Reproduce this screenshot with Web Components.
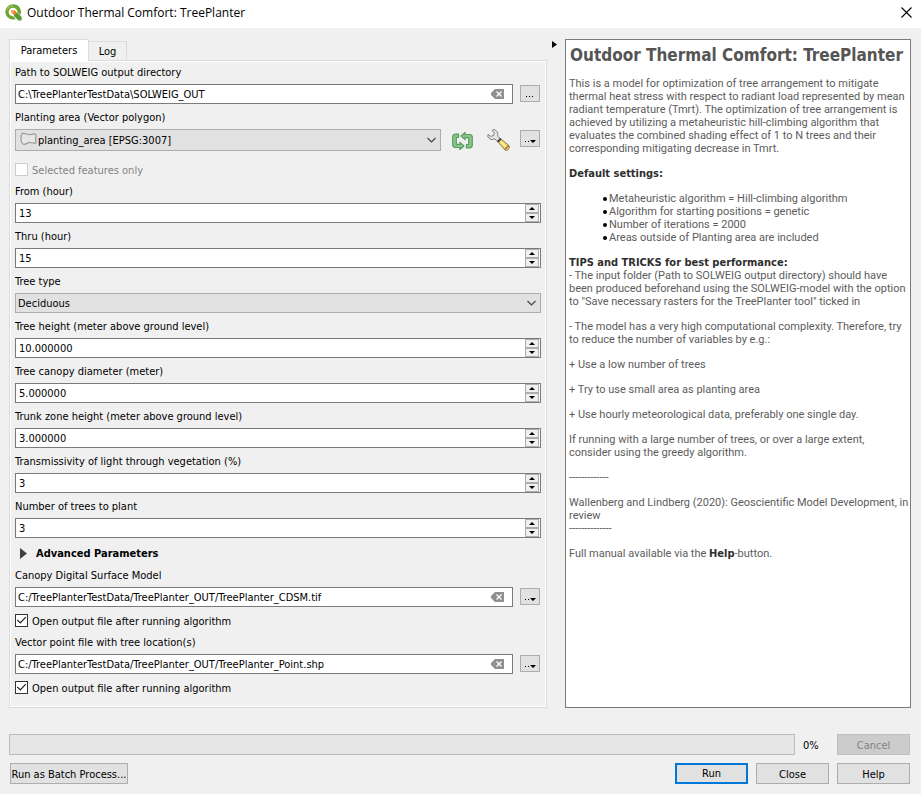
<!DOCTYPE html>
<html lang="en">
<head>
<meta charset="utf-8">
<title>Outdoor Thermal Comfort: TreePlanter</title>
<style>
html, body { margin: 0; min-height: 100vh; background: #f0f0f0; }
body { font: 11px/13px "DejaVu Sans Condensed", "DejaVu Sans", sans-serif; color: #000; display: flex; }
tool-dialog { flex: 1; }
</style>
</head>
<body>
<tool-dialog>
  <title-bar slot="title">Outdoor Thermal Comfort: TreePlanter</title-bar>
  <tab-pane slot="form">
    <path-field label="Path to SOLWEIG output directory" value="C:\TreePlanterTestData\SOLWEIG_OUT"></path-field>
    <combo-field label="Planting area (Vector polygon)" value="planting_area [EPSG:3007]" layer></combo-field>
    <check-field label="Selected features only" disabled></check-field>
    <spin-field label="From (hour)" value="13"></spin-field>
    <spin-field label="Thru (hour)" value="15"></spin-field>
    <combo-field label="Tree type" value="Deciduous"></combo-field>
    <spin-field label="Tree height (meter above ground level)" value="10.000000"></spin-field>
    <spin-field label="Tree canopy diameter (meter)" value="5.000000"></spin-field>
    <spin-field label="Trunk zone height (meter above ground level)" value="3.000000"></spin-field>
    <spin-field label="Transmissivity of light through vegetation (%)" value="3"></spin-field>
    <spin-field label="Number of trees to plant" value="3"></spin-field>
    <advanced-toggle>Advanced Parameters</advanced-toggle>
    <path-field label="Canopy Digital Surface Model" value="C:/TreePlanterTestData/TreePlanter_OUT/TreePlanter_CDSM.tif" menu></path-field>
    <check-field label="Open output file after running algorithm" checked></check-field>
    <path-field label="Vector point file with tree location(s)" value="C:/TreePlanterTestData/TreePlanter_OUT/TreePlanter_Point.shp" menu></path-field>
    <check-field label="Open output file after running algorithm" checked></check-field>
  </tab-pane>
  <help-panel slot="help"></help-panel>
  <dialog-footer slot="footer"></dialog-footer>
</tool-dialog>

<script>
const BASE = `
  *, *::before, :host { box-sizing: border-box; }
  :host { display: block; }
  button, input, select { font: inherit; color: inherit; margin: 0; padding: 0; border-radius: 0; outline: 0; }
  label { display: block; height: 13px; line-height: 15px; white-space: nowrap; }
  svg { display: block; }
`;
function define(name, render) {
  customElements.define(name, class extends HTMLElement {
    constructor() {
      super();
      this.attachShadow({ mode: "open" });
    }
    connectedCallback() {
      const t = document.createElement("template");
      const [css, html] = render(this);
      t.innerHTML = `<style>${BASE}${css}</style>${html}`;
      this.shadowRoot.replaceChildren(t.content.cloneNode(true));
    }
  });
}

define("tool-dialog", () => [`
  :host { display: flex; flex-direction: column; min-width: 0; }
  main { display: grid; grid-template-columns: minmax(0, 538fr) 18px minmax(0, 346fr); padding: 11px 10px 0 9px; }
  .split { border: 0; background: none; align-self: start; padding: 2px 0 0 5px; }
`, `
  <slot name="title"></slot>
  <main>
    <slot name="form"></slot>
    <button class="split" aria-label="Collapse help"><svg width="5" height="7"><path d="M0 0L5 3.5L0 7z"/></svg></button>
    <slot name="help"></slot>
  </main>
  <slot name="footer"></slot>
`]);

define("title-bar", () => [`
  :host { display: flex; align-items: center; gap: 5px; height: 28px; padding: 0 9px 3px 5px; background: #fff; font: 12px/16px "Open Sans", "Noto Sans", sans-serif; }
  h1 { font: inherit; margin: 0; flex: 1; white-space: nowrap; }
  button { border: 0; background: none; }
`, `
  <svg width="17" height="17" viewBox="0 0 17 17">
    <path d="M8 0.3A7.6 7.6 0 1 0 8 15.6c1 0 1.800-.1 2.700-.5L8.200 12.300A4.300 4.300 0 1 1 12.300 8.100l3 3A7.600 7.600 0 0 0 8 .3z" fill="#6ca62e"/>
    <path d="M9 8.600h3.300l4.300 4.400v3.400h-3.200L9 12z" fill="#589632"/>
    <path d="M2.200 6A6.200 6.200 0 0 1 8 1.900" fill="none" stroke="#9ac54d" stroke-width="1.200"/>
    <path d="M6.200 6.300h3.400l1.700 1.700v2.500H8.600L6.200 8.600z" fill="#ee7913"/>
    <path d="M6.200 6.300h2l1 1.400-1 1.500-2-1z" fill="#f5a968"/>
  </svg>
  <h1><slot></slot></h1>
  <button aria-label="Close window"><svg width="11" height="11"><path d="M.5.5l10 10M10.500.5l-10 10" stroke="#000" stroke-width="1.100"/></svg></button>
`]);

define("tab-pane", () => [`
  :host { display: flex; flex-direction: column; }
  nav { display: flex; align-items: flex-end; height: 21px; }
  nav button { border: 1px solid #dcdcdc; border-bottom: 0; height: 19px; padding: 0 9px; background: #f0f0f0; white-space: nowrap; }
  nav button[aria-selected=true] { height: 22px; margin-bottom: -1px; background: #fff; padding: 0 10px 1px; min-width: 80px; position: relative; }
  nav button + button { border-left: 0; min-width: 38px; }
  section { flex: 1; border: 1px solid #dcdcdc; box-shadow: inset 0 0 0 1px #fff; padding: 4px 5px 11px; display: flex; flex-direction: column; gap: 6px; }
`, `
  <nav role="tablist"><button role="tab" aria-selected="true">Parameters</button><button role="tab" aria-selected="false">Log</button></nav>
  <section role="tabpanel"><slot></slot></section>
`]);

const DOTS = `
  .dots { width: 20px; height: 17px; border: 1px solid #adadad; background: #e1e1e1; display: flex; align-items: flex-end; justify-content: center; padding-bottom: 3px; margin-right: 1px; flex: none; }
`;
const dotsBtn = menu => `<button class="dots" aria-label="Browse">${menu
  ? `<svg width="11" height="3"><path d="M0 1h1v1H0zM3 1h1v1H3zM5 0h6L8 3z"/></svg>`
  : `<svg width="8" height="3"><path d="M0 1h1v1H0zM3 1h1v1H3zM6 1h1v1H6z"/></svg>`}</button>`;

define("path-field", el => [`
  ${DOTS}
  label { margin-bottom: 6px; }
  .row { display: flex; gap: 7px; align-items: center; }
  .row .dots { margin-bottom: 1px; }
  .box { flex: 1; min-width: 0; display: flex; align-items: center; height: 20px; background: #fff; border: 1px solid #7a7a7a; padding-right: 8px; }
  input { flex: 1; min-width: 0; border: 0; background: none; padding: 1px 2px 0; height: 18px; }
  .clear { border: 0; background: none; }
`, `
  <label for="f">${el.getAttribute("label")}</label>
  <div class="row">
    <div class="box"><input id="f" type="text" value="${el.getAttribute("value")}">
      <button class="clear" aria-label="Clear"><svg width="13" height="10"><path d="M4 0h9v10H4L0 6V4z" fill="#8f8f8f"/><path d="M5.500 2.500l5 5M10.500 2.500l-5 5" stroke="#fff" stroke-width="1.200"/></svg></button>
    </div>
    ${dotsBtn(el.hasAttribute("menu"))}
  </div>
`]);

define("combo-field", el => {
  const layer = el.hasAttribute("layer");
  return [`
  ${DOTS}
  label { margin-bottom: 6px; }
  .row { display: flex; }
  .box { flex: 1; min-width: 0; display: grid; align-items: center; height: ${layer ? 22 : 20}px; background: #e1e1e1; border: 1px solid #adadad; }
  .box > * { grid-area: 1 / 1; }
  select { appearance: none; width: 100%; height: 100%; border: 0; background: none; padding: 1px 20px 0 ${layer ? 22 : 2}px; }
  .arrow { justify-self: end; margin-right: 4px; pointer-events: none; }
  .shape { margin: -2px 0 0 4px; pointer-events: none; }
  .icon { border: 0; background: none; display: flex; align-items: center; }
  .cycle { margin-left: 11px; padding-top: 2px; }
  .wrench { margin-left: 14px; margin-right: 10px; }
  .dots { margin-top: 1px; }
`, `
  <label for="f">${el.getAttribute("label")}</label>
  <div class="row">
    <div class="box"><select id="f"><option>${el.getAttribute("value")}</option></select>
      ${layer ? `<svg class="shape" width="18" height="14"><path d="M2 1.500C5 .5 8 3.500 11 2.500s5-1 5 1.500-1 4 0 6-4 1-6 .5-5 3-7 1.500C0 10 1 4 2 1.500z" fill="#e6e6e6" stroke="#999" stroke-width="1.200"/></svg>` : ""}
      <svg class="arrow" width="9" height="6"><path d="M.5 1l4 4 4-4" fill="none" stroke="#444" stroke-width="1.200"/></svg>
    </div>
    ${layer ? `
    <button class="icon cycle" aria-label="Iterate over this layer"><svg width="21" height="18" viewBox="0 0 21 18">
      <path d="M6.500 2.200H3.500Q.7 2.200.7 5v7.500Q.7 15.500 3.500 15.500H8V17.500L12 14 8 10.500V12.300H4.300V5.500H6.500z" fill="#8cc68f" stroke="#5a9c5f" stroke-width="1.200"/>
      <path d="M14.500 15.800H17.500Q20.300 15.800 20.300 13V5.500Q20.300 2.500 17.500 2.500H13V.5L9 4 13 7.500V5.700H16.700V12.500H14.500z" fill="#8cc68f" stroke="#5a9c5f" stroke-width="1.200"/></svg></button>
    <button class="icon wrench" aria-label="Advanced options"><svg width="23" height="22" viewBox="0 0 23 22">
      <path d="M5 1.200l2.500-.7 3 2.500.5 4.500 3 3-3 2.700-3-3.200-4 .5L.8 8 1 5.500l3 2 3-1.500L7 3.500z" fill="#e2e5e5" stroke="#777" stroke-width=".9"/>
      <path d="M10.500 13l3.500-3.500" stroke="#444" stroke-width="2"/>
      <path d="M11.500 13.500l3-3L22 16.500q1 2-.8 4t-3.200.5z" fill="#f2d571" stroke="#8b6f38" stroke-width=".9"/>
      <path d="M13.500 12.500l6 5.500" stroke="#fff1ae" stroke-width="1.200"/><path d="M18 20.500l3.500-4" stroke="#987635" stroke-width="1.500"/></svg></button>
    ${dotsBtn(true)}` : ""}
  </div>
`];
});

define("check-field", el => {
  const off = el.hasAttribute("disabled");
  return [`
  :host { display: flex; gap: 4px; padding: ${off ? 6 : 1}px 0 2px; color: ${off ? "#838383" : "#000"}; }
  input { appearance: none; width: 13px; height: 13px; border: 1px solid ${off ? "#ccc" : "#333"}; background: #fff; display: grid; place-items: center; }
  input:checked::before { content: ""; width: 11px; height: 11px; background: #222; clip-path: polygon(8% 48%, 16% 40%, 39% 64%, 85% 15%, 93% 23%, 39% 80%); }
`, `<input id="c" type="checkbox" ${el.hasAttribute("checked") ? "checked" : ""} ${off ? "disabled" : ""}><label for="c">${el.getAttribute("label")}</label>`];
});

define("spin-field", el => [`
  label { margin-bottom: 6px; }
  .box { display: flex; height: 20px; background: #fff; border: 1px solid #7a7a7a; padding-right: 1px; }
  input { appearance: textfield; flex: 1; min-width: 0; border: 0; background: none; padding: 1px 3px 0; }
  input::-webkit-inner-spin-button { appearance: none; display: none; }
  .steps { width: 14px; display: grid; grid-template-rows: 9px 9px; }
  .steps button { border: 1px solid #adadad; background: #f0f0f0; display: grid; place-items: center; }
`, `
  <label for="f">${el.getAttribute("label")}</label>
  <div class="box"><input id="f" type="number" step="any" value="${el.getAttribute("value")}">
    <div class="steps"><button aria-label="Increase"><svg width="6" height="3"><path d="M0 3L3 0l3 3z"/></svg></button><button aria-label="Decrease"><svg width="6" height="3"><path d="M0 0h6L3 3z"/></svg></button></div>
  </div>
`]);

define("advanced-toggle", () => [`
  button { border: 0; background: none; height: 18px; display: flex; align-items: center; gap: 9px; padding-left: 5px; font-weight: bold; white-space: nowrap; }
`, `<button aria-expanded="false"><svg width="7" height="11"><path d="M0 0L7 5.500L0 11z" fill="#404040"/></svg><slot></slot></button>`]);

define("help-panel", () => [`
  :host { background: #fff; border: 1px solid #7a7a7a; padding: 5px 0 6px 3px; color: #5c5c5c; font-family: Roboto, "Liberation Sans", sans-serif; }
  h2, b { font-family: "DejaVu Sans Condensed", "DejaVu Sans", sans-serif; }
  h2 { font-size: 17px; line-height: 20px; margin: 0 0 12px 1px; color: #555; white-space: nowrap; }
  p, ul { margin: 0 0 12px; }
  b { color: #2e2e2e; line-height: 12px; }
  ul { list-style: none; padding-left: 40px; }
  li { display: flex; align-items: center; margin-left: -6px; gap: 2px; }
  li::before { content: ""; width: 4px; height: 4px; border-radius: 50%; background: #000; }
`, `
  <h2>Outdoor Thermal Comfort: TreePlanter</h2>
  <p>This is a model for optimization of tree arrangement to mitigate<br>thermal heat stress with respect to radiant load represented by mean<br>radiant temperature (Tmrt). The optimization of tree arrangement is<br>achieved by utilizing a metaheuristic hill-climbing algorithm that<br>evaluates the combined shading effect of 1 to N trees and their<br>corresponding mitigating decrease in Tmrt.</p>
  <p><b>Default settings:</b></p>
  <ul><li>Metaheuristic algorithm = Hill-climbing algorithm</li><li>Algorithm for starting positions = genetic</li><li>Number of iterations = 2000</li><li>Areas outside of Planting area are included</li></ul>
  <p><b>TIPS and TRICKS for best performance:</b><br>- The input folder (Path to SOLWEIG output directory) should have<br>been produced beforehand using the SOLWEIG-model with the option<br>to "Save necessary rasters for the TreePlanter tool" ticked in</p>
  <p>- The model has a very high computational complexity. Therefore, try<br>to reduce the number of variables by e.g.:</p>
  <p>+ Use a low number of trees</p>
  <p>+ Try to use small area as planting area</p>
  <p>+ Use hourly meteorological data, preferably one single day.</p>
  <p>If running with a large number of trees, or over a large extent,<br>consider using the greedy algorithm.</p>
  <p>-------------</p>
  <p>Wallenberg and Lindberg (2020): Geoscientific Model Development, in<br>review<br>--------------</p>
  <p>Full manual available via the <b>Help</b>-button.</p>
`]);

define("push-button", el => [`
  button { width: 100%; height: 21px; background: #e1e1e1; border: 1px solid #adadad; white-space: nowrap; padding-top: 1px; }
  :host([primary]) button { border: 2px solid #0078d7; padding: 0; }
  button:disabled { background: #ccc; border-color: #bfbfbf; color: #838383; }
`, `<button ${el.hasAttribute("disabled") ? "disabled" : ""}><slot></slot></button>`]);

define("dialog-footer", () => [`
  :host { display: flex; flex-direction: column; gap: 8px; padding: 26px 11px 9px 9px; }
  div { display: flex; gap: 8px; align-items: center; }
  progress { appearance: none; flex: 1; min-width: 0; height: 21px; border: 1px solid #bcbcbc; background: #e6e6e6; }
  progress::-webkit-progress-bar { background: #e6e6e6; }
  label { width: 26px; }
  push-button { width: 73px; }
  .batch { width: 118px; margin: 0 auto 0 1px; }
`, `
  <div><progress id="p" max="100" value="0"></progress><label for="p">0%</label><push-button disabled>Cancel</push-button></div>
  <div><push-button class="batch">Run as Batch Process...</push-button><push-button primary>Run</push-button><push-button>Close</push-button><push-button>Help</push-button></div>
`]);
</script>
</body>
</html>
